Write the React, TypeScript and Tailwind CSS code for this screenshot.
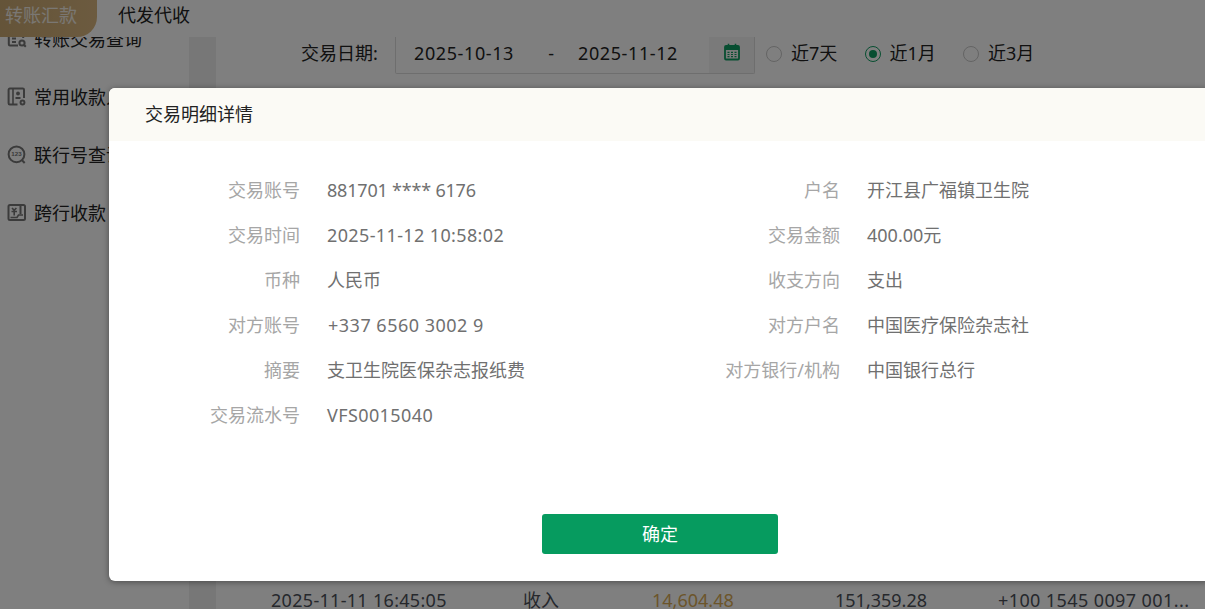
const FONT = "font-['Noto_Sans','Noto_Sans_CJK_SC',sans-serif]";
const S = "#767676";

function QueryIcon() {
  return (
    <svg width="20" height="20" viewBox="0 0 20 20" fill="none" stroke={S} strokeWidth="2">
      <path d="M11 16.500H3a1.200 1.200 0 0 1-1.200-1.200V3A1.200 1.200 0 0 1 3 1.800h12A1.200 1.200 0 0 1 16.200 3v6" />
      <path d="M5 6h7M5 9.500h4M5 13h4" />
      <circle cx="15" cy="14" r="2.600" />
      <path d="M17 16l1.800 1.800" />
    </svg>
  );
}

function PayeeIcon() {
  return (
    <svg width="20" height="20" viewBox="0 0 20 20" fill="none" stroke={S} strokeWidth="2">
      <path d="M10.500 17.500H2.800a1.200 1.200 0 0 1-1.200-1.200V2.800a1.200 1.200 0 0 1 1.200-1.200h13a1.200 1.200 0 0 1 1.200 1.200V11" />
      <path d="M6 1.800v15.500" strokeWidth="1.600" />
      <circle cx="11" cy="6.500" r="1.900" fill={S} stroke="none" />
      <path d="M8.500 11h5" />
      <circle cx="15.500" cy="15.500" r="2.900" fill={S} stroke="none" />
      <circle cx="15.500" cy="15.500" r="1" fill="#fff" stroke="none" />
    </svg>
  );
}

function BankIcon() {
  return (
    <svg width="20" height="20" viewBox="0 0 20 20" fill="none" stroke={S} strokeWidth="2">
      <circle cx="9.500" cy="9.300" r="7.900" />
      <path d="M14.800 15l2.900 3" />
      <text x="9.500" y="11.400" textAnchor="middle" fontSize="6.200" fill={S} stroke="none" fontWeight="700" fontFamily="Liberation Sans, sans-serif">123</text>
    </svg>
  );
}

function CrossIcon() {
  return (
    <svg width="20" height="20" viewBox="0 0 20 20" fill="none" stroke={S} strokeWidth="2">
      <path d="M3 2h13.500A1.500 1.500 0 0 1 18 3.500v12a1.500 1.500 0 0 1-1.500 1.500H3a1.500 1.500 0 0 1-1.500-1.500v-12A1.500 1.500 0 0 1 3 2z" />
      <path d="M13.500 2v9" />
      <path d="M5 5l2.200 2.400L9.400 5M4.500 8.500h5.500M7.200 7.500V12.500" strokeWidth="1.600" />
      <path d="M3.500 14.500h6.500l1.500-2.500h4.500" strokeWidth="1.600" />
    </svg>
  );
}

function CalendarIcon() {
  return (
    <svg width="18" height="18" viewBox="0 0 18 18" fill="none">
      <rect x="2" y="3" width="14" height="13.500" rx="1" stroke="#0f9d62" strokeWidth="1.800" />
      <rect x="2" y="3" width="14" height="4" fill="#0f9d62" />
      <path d="M5.500 0.800v3M12.500 0.800v3" stroke="#0f9d62" strokeWidth="1.600" />
      <path d="M4.500 9.300h9M4.500 11.500h9M4.500 13.700h9" stroke="#0f9d62" strokeWidth="1.200" strokeDasharray="2 1.500" />
    </svg>
  );
}

function Radio({ label, checked }: { label: string; checked?: boolean }) {
  return (
    <div className="flex w-[98.500px] items-center gap-[9px]">
      <span className={`flex h-4 w-4 items-center justify-center rounded-full border bg-white ${checked ? "border-[#0f9d62]" : "border-[#c8c8c8]"}`}>
        {checked && <span className="h-2 w-2 rounded-full bg-[#0f9d62]" />}
      </span>
      <span>{label}</span>
    </div>
  );
}

function SideItem({ icon, label }: { icon: React.ReactNode; label: string }) {
  return (
    <div className="flex h-[58px] items-center gap-[7px] pl-[6px]">
      <span className="flex w-[21px] shrink-0 items-center justify-center">{icon}</span>
      <span className="whitespace-nowrap">{label}</span>
    </div>
  );
}

type Row = { l: string; v: string; t?: string };
const rows: Row[] = [
  { l: "交易账号", v: "881701 **** 6176", t: "tracking-[-0.2px]" },
  { l: "户名", v: "开江县广福镇卫生院" },
  { l: "交易时间", v: "2025-11-12 10:58:02", t: "tracking-[0.37px]" },
  { l: "交易金额", v: "400.00元" },
  { l: "币种", v: "人民币" },
  { l: "收支方向", v: "支出" },
  { l: "对方账号", v: "+337 6560 3002 9", t: "tracking-[0.5px] pl-px" },
  { l: "对方户名", v: "中国医疗保险杂志社" },
  { l: "摘要", v: "支卫生院医保杂志报纸费" },
  { l: "对方银行/机构", v: "中国银行总行" },
  { l: "交易流水号", v: "VFS0015040", t: "tracking-[0.4px]" },
];

function Cell({ l, v, t }: Row) {
  return (
    <div className="flex h-[45px] items-center">
      <span className="w-[191px] shrink-0 text-right whitespace-nowrap text-[#a6a6a6]">{l}</span>
      <span className={`ml-[27px] whitespace-nowrap text-[#707070] ${t ?? ""}`}>{v}</span>
    </div>
  );
}

export default function App() {
  return (
    <div className={`${FONT} relative flex h-screen w-full flex-col overflow-hidden bg-white text-[18px] text-[#222]`}>
      <header className="relative z-10 flex h-[37px] shrink-0 bg-white">
        <div className="flex h-[37px] w-[97px] items-center rounded-br-[20px] bg-gradient-to-r from-[#c9a872] to-[#d9b67f] pb-[6px] pl-[5px] text-[#f4efe6]">
          转账汇款
        </div>
        <div className="flex h-[37px] items-center pb-[6px] pl-[21px]">代发代收</div>
      </header>

      <div className="flex min-h-0 flex-1">
        <aside className="w-[189px] shrink-0">
          <div className="-mt-[27px]">
            <SideItem icon={<QueryIcon />} label="转账交易查询" />
            <SideItem icon={<PayeeIcon />} label="常用收款人" />
            <SideItem icon={<BankIcon />} label="联行号查询" />
            <SideItem icon={<CrossIcon />} label="跨行收款" />
          </div>
        </aside>
        <div className="w-[27px] shrink-0 bg-[#eeeeee]" />
        <main className="flex min-w-0 flex-1 flex-col">
          <div className="flex items-start pl-[85px]">
            <span className="flex h-[33px] w-[94px] items-center">交易日期:</span>
            <div className="flex h-[37px] w-[360px] items-stretch rounded-b-[2px] border-x border-b border-[#ddd]">
              <span className="flex h-[32px] w-[118px] items-center justify-end tracking-[0.6px]">2025-10-13</span>
              <span className="flex h-[32px] w-[40px] items-center justify-end">-</span>
              <span className="flex h-[32px] w-[124px] items-center justify-end tracking-[0.6px]">2025-11-12</span>
              <span className="ml-auto flex w-[45px] items-center justify-center bg-[#f5f5f5] pb-[6px]">
                <CalendarIcon />
              </span>
            </div>
            <div className="ml-[11px] flex h-[33px]">
              <Radio label="近7天" />
              <Radio label="近1月" checked />
              <Radio label="近3月" />
            </div>
          </div>
          <div className="mt-auto flex h-[18px] items-center whitespace-nowrap text-[#4c5059]">
            <span className="ml-[55px] w-[252px] tracking-[0.3px]">2025-11-11 16:45:05</span>
            <span className="w-[129px]">收入</span>
            <span className="w-[183px] text-[#d9ab55]">14,604.48</span>
            <span className="w-[163px]">151,359.28</span>
            <span className="tracking-[0.4px]">+100 1545 0097 001...</span>
          </div>
        </main>
      </div>

      <div className="absolute inset-0 z-20 bg-black/50" />

      <div className="absolute left-[109px] top-[88px] z-30 flex h-[493px] w-[1102px] flex-col overflow-hidden rounded-[6px] bg-white shadow-[0_1px_6px_rgba(0,0,0,0.4)]">
        <div className="flex h-[53px] shrink-0 items-center bg-[#fbfaf5] pl-[36px] text-[#222]">交易明细详情</div>
        <div className="grid grid-cols-[540px_540px] pt-[27px]">
          {rows.map((r) => (
            <Cell key={r.l} {...r} />
          ))}
        </div>
        <div className="mt-auto flex justify-center pb-[27px]">
          <button className="h-10 w-[236px] rounded-[3px] bg-[#069b5f] text-white">确定</button>
        </div>
      </div>
    </div>
  );
}
